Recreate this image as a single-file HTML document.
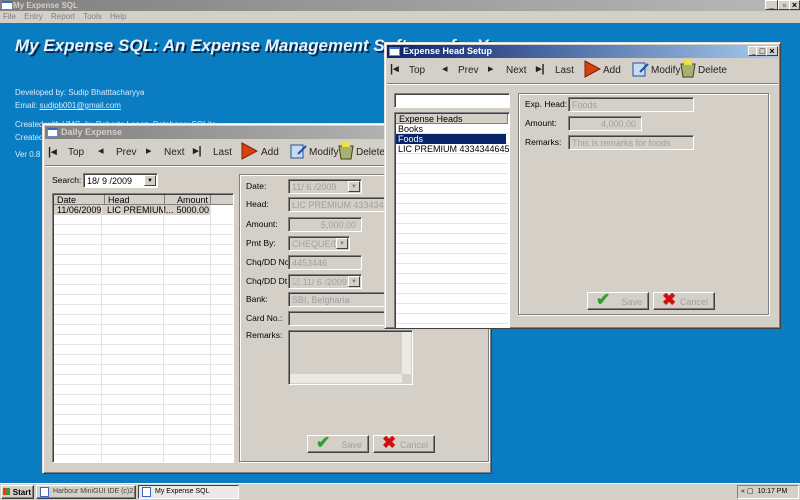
<!DOCTYPE html>
<html><head><meta charset="utf-8"><style>
*{box-sizing:border-box;margin:0;padding:0}
body{width:800px;height:500px;overflow:hidden;position:relative;background:#0a7cc1;font-family:"Liberation Sans",sans-serif;font-size:10px;color:#000}
.a{position:absolute}
.win{position:absolute;background:#d4d0c8;border:1px solid;border-color:#dfdfdf #404040 #404040 #dfdfdf;box-shadow:inset 1px 1px #fff,inset -1px -1px #808080;overflow:hidden}
.tb{position:absolute;left:2px;right:2px;top:2px;height:13px;color:#d4d0c8;font-weight:bold;font-size:9px;line-height:13px;padding-left:16px}
.tb.in{background:linear-gradient(90deg,#808080,#c0c0c0)}
.tb.ac{background:linear-gradient(90deg,#0a246a,#a6caf0);color:#fff}
.ico{position:absolute;left:2px;top:2px;width:11px;height:9px;background:#fff;border:1px solid #6a8cc8;border-top:2px solid #3a6ac8}
.tl{position:absolute;font-size:10px;color:#222}
.sunk{position:absolute;background:#d4d0c8;border:1px solid;border-color:#808080 #fff #fff #808080;box-shadow:inset 1px 1px #404040}
.white{background:#fff}
.grp{position:absolute;border:1px solid #808080;box-shadow:1px 1px #fff,inset 1px 1px #fff}
.lbl{position:absolute;font-size:8.5px;color:#000;white-space:nowrap}
.dis{color:#a0a0a0;font-size:9px;padding:2px 3px;line-height:10px;white-space:nowrap}
.btn{position:absolute;background:#d4d0c8;border:1px solid;border-color:#fff #404040 #404040 #fff;box-shadow:inset -1px -1px #808080;color:#a0a0a0;font-size:9px;text-align:right;padding:4px 6px 0 0;white-space:nowrap;overflow:hidden}
.dd{position:absolute;right:1px;top:1px;width:12px;bottom:1px;background:#d4d0c8;border:1px solid;border-color:#fff #404040 #404040 #fff;font-size:6px;text-align:center;line-height:10px;color:#808080}
.cap{position:absolute;width:13px;height:11px;background:#d4d0c8;border:1px solid;border-color:#fff #404040 #404040 #fff;font-size:9px;line-height:9px;text-align:center;color:#000;font-weight:bold}
</style></head><body>
<div class="a" style="left:0;top:0;width:800px;height:11px;background:linear-gradient(90deg,#808080,#b8b8b8)"></div>
<div class="a" style="left:2px;top:1px;width:10px;height:8px;background:#fff;border-top:2px solid #3a6ac8"></div>
<div class="a" style="left:13px;top:0;color:#d4d0c8;font-weight:bold;font-size:8px;line-height:11px">My Expense SQL</div>
<div class="cap" style="left:765px;top:0;height:10px">_</div><div class="cap" style="left:778px;top:0;height:10px">▫</div><div class="cap" style="left:789px;top:0;height:10px;width:11px">×</div>
<div class="a" style="left:0;top:11px;width:800px;height:12px;background:#d4d0c8;font-size:8px;color:#808080;line-height:12px;padding-left:3px;word-spacing:6px">File Entry Report Tools Help</div>

<div class="a" style="left:15px;top:36px;font-size:17px;font-weight:bold;font-style:italic;color:#e6f2ff;text-shadow:2px 2px 0 #032a48;white-space:nowrap">My Expense SQL: An Expense Management Software for You</div>
<div class="a" style="left:15px;top:86px;font-size:8px;color:#d8ecff;line-height:13px">Developed by: Sudip Bhatttacharyya<br>Email: <u>sudipb001@gmail.com</u></div>
<div class="a" style="left:15px;top:118px;font-size:8px;color:#d8ecff;line-height:13px">Created with HMG, by Roberto Lopez. Database: SQLite<br>Created</div>
<div class="a" style="left:15px;top:150px;font-size:8px;color:#d8ecff">Ver 0.8</div>

<div class="win" style="left:42px;top:123px;width:450px;height:351px">
 <div class="tb in"><div class="ico"></div>Daily Expense</div>
 <div class="a" style="left:2px;right:2px;top:41px;border-top:1px solid #808080;border-bottom:1px solid #fff"></div>
 <div class="tl" style="left:5px;top:21px;font-weight:bold;font-size:11px">|◂</div><div class="tl" style="left:25px;top:23px">Top</div>
 <div class="tl" style="left:55px;top:20px;font-size:11px">◂</div><div class="tl" style="left:73px;top:23px">Prev</div>
 <div class="tl" style="left:103px;top:20px;font-size:11px">▸</div><div class="tl" style="left:121px;top:23px">Next</div>
 <div class="tl" style="left:150px;top:20px;font-weight:bold;font-size:11px">▸|</div><div class="tl" style="left:170px;top:23px">Last</div>
 <svg class="a" style="left:197px;top:17px" width="18" height="20"><path d="M2 2 L17 10 L2 18Z" fill="#d84010" stroke="#802000"/></svg><div class="tl" style="left:218px;top:23px">Add</div>
 <svg class="a" style="left:247px;top:18px" width="18" height="18"><rect x="1" y="3" width="12" height="13" fill="#c8dcf0" stroke="#2050a0"/><path d="M8 12 L16 4" stroke="#2050a0" stroke-width="2"/></svg><div class="tl" style="left:266px;top:23px">Modify</div>
 <svg class="a" style="left:294px;top:16px" width="18" height="20"><path d="M2 6 L16 6 L14 19 L4 19Z" fill="#a8b070" stroke="#404020"/><rect x="5" y="1" width="8" height="6" fill="#f0e040"/></svg><div class="tl" style="left:313px;top:23px">Delete</div>
 <div class="lbl" style="left:9px;top:51px">Search:</div>
 <div class="sunk white" style="left:40px;top:49px;width:75px;height:15px"><span class="a" style="left:3px;top:2px;font-size:9px">18/ 9 /2009</span><div class="dd" style="color:#000">▼</div></div>
 <div class="sunk white" style="left:9px;top:69px;width:182px;height:270px;overflow:hidden">
  <div class="a" style="left:1px;top:1px;width:180px;height:10px;background:#d4d0c8;font-size:9px;line-height:10px;border-bottom:1px solid #808080"><span class="a" style="left:3px">Date</span><span class="a" style="left:50px;border-left:1px solid #808080;padding-left:3px">Head</span><span class="a" style="left:110px;border-left:1px solid #808080;width:47px;text-align:right;padding-right:2px;border-right:1px solid #808080">Amount</span></div>
  <div class="a" style="left:1px;top:11px;width:157px;height:10px;background:#d4d0c8;font-size:9px;line-height:10px"><span class="a" style="left:3px">11/06/2009</span><span class="a" style="left:50px;padding-left:3px">LIC PREMIUM...</span><span class="a" style="left:110px;width:47px;text-align:right;padding-right:2px">5000.00</span></div>
  <div class="a" style="left:1px;top:21px;width:180px;height:250px;background:repeating-linear-gradient(#fff 0 9px,#e4e4e4 9px 10px)"></div>
  <div class="a" style="left:48px;top:11px;height:260px;border-left:1px solid #e4e4e4"></div>
  <div class="a" style="left:110px;top:11px;height:260px;border-left:1px solid #e4e4e4"></div>
  <div class="a" style="left:157px;top:11px;height:260px;border-left:1px solid #e4e4e4"></div>
 </div>
 <div class="grp" style="left:196px;top:50px;width:250px;height:288px"></div>
 <div class="lbl" style="left:203px;top:57px">Date:</div><div class="sunk" style="left:245px;top:55px;width:74px;height:15px"><span class="dis a">11/ 6 /2009</span><div class="dd">▼</div></div>
 <div class="lbl" style="left:203px;top:75px">Head:</div><div class="sunk" style="left:245px;top:73px;width:200px;height:15px"><span class="dis a">LIC PREMIUM 43343446453</span></div>
 <div class="lbl" style="left:203px;top:95px">Amount:</div><div class="sunk" style="left:245px;top:93px;width:74px;height:15px"><span class="dis a" style="right:2px">5,000.00</span></div>
 <div class="lbl" style="left:203px;top:114px">Pmt By:</div><div class="sunk" style="left:245px;top:112px;width:62px;height:15px;overflow:hidden"><span class="dis a">CHEQUE/DD</span><div class="dd">▼</div></div>
 <div class="lbl" style="left:203px;top:133px">Chq/DD No.:</div><div class="sunk" style="left:245px;top:131px;width:74px;height:15px"><span class="dis a">4453446</span></div>
 <div class="lbl" style="left:203px;top:152px">Chq/DD Dt.:</div><div class="sunk" style="left:245px;top:150px;width:74px;height:15px;overflow:hidden"><span class="dis a">☑ 11/ 6 /2009</span><div class="dd">▼</div></div>
 <div class="lbl" style="left:203px;top:170px">Bank:</div><div class="sunk" style="left:245px;top:168px;width:200px;height:15px"><span class="dis a">SBI, Belgharia</span></div>
 <div class="lbl" style="left:203px;top:189px">Card No.:</div><div class="sunk" style="left:245px;top:187px;width:200px;height:15px"></div>
 <div class="lbl" style="left:203px;top:206px">Remarks:</div><div class="sunk" style="left:245px;top:206px;width:125px;height:55px"><div class="a" style="right:1px;top:1px;width:9px;bottom:10px;background:#ece9e4"></div><div class="a" style="left:1px;bottom:1px;right:10px;height:9px;background:#ece9e4"></div></div>
 <div class="btn" style="left:264px;top:311px;width:62px;height:18px">Save<span class="a" style="left:8px;top:-3px;color:#2aa02a;font-size:17px;font-weight:bold">✔</span></div>
 <div class="btn" style="left:330px;top:311px;width:62px;height:18px">Cancel<span class="a" style="left:8px;top:-3px;color:#d01010;font-size:17px;font-weight:bold">✖</span></div>
</div>

<div class="win" style="left:384px;top:42px;width:397px;height:287px">
 <div class="tb ac"><div class="ico"></div>Expense Head Setup</div>
 <div class="cap" style="left:363px;top:3px;height:10px">_</div><div class="cap" style="left:371px;top:3px;height:10px">□</div><div class="cap" style="left:381px;top:3px;height:10px;width:12px">×</div>
 <div class="a" style="left:2px;right:2px;top:40px;border-top:1px solid #808080;border-bottom:1px solid #fff"></div>
 <div class="tl" style="left:5px;top:19px;font-weight:bold;font-size:11px">|◂</div><div class="tl" style="left:24px;top:22px">Top</div>
 <div class="tl" style="left:57px;top:19px;font-size:11px">◂</div><div class="tl" style="left:73px;top:22px">Prev</div>
 <div class="tl" style="left:103px;top:19px;font-size:11px">▸</div><div class="tl" style="left:121px;top:22px">Next</div>
 <div class="tl" style="left:151px;top:19px;font-weight:bold;font-size:11px">▸|</div><div class="tl" style="left:170px;top:22px">Last</div>
 <svg class="a" style="left:198px;top:16px" width="18" height="20"><path d="M2 2 L17 10 L2 18Z" fill="#d84010" stroke="#802000"/></svg><div class="tl" style="left:218px;top:22px">Add</div>
 <svg class="a" style="left:247px;top:17px" width="18" height="18"><rect x="1" y="3" width="12" height="13" fill="#c8dcf0" stroke="#2050a0"/><path d="M8 12 L16 4" stroke="#2050a0" stroke-width="2"/></svg><div class="tl" style="left:266px;top:22px">Modify</div>
 <svg class="a" style="left:294px;top:15px" width="18" height="20"><path d="M2 6 L16 6 L14 19 L4 19Z" fill="#a8b070" stroke="#404020"/><rect x="5" y="1" width="8" height="6" fill="#f0e040"/></svg><div class="tl" style="left:313px;top:22px">Delete</div>
 <div class="sunk white" style="left:9px;top:50px;width:116px;height:15px"></div>
 <div class="sunk white" style="left:9px;top:69px;width:116px;height:240px;overflow:hidden">
  <div class="a" style="left:1px;top:1px;width:112px;height:10px;background:#d4d0c8;font-size:9px;line-height:10px;padding-left:3px;border-bottom:1px solid #808080;border-right:1px solid #808080">Expense Heads</div>
  <div class="a" style="left:1px;top:11px;width:112px;height:230px;background:repeating-linear-gradient(#fff 0 9px,#e4e4e4 9px 10px)"></div>
  <div class="a" style="left:3px;top:11px;font-size:9px;line-height:10px">Books</div>
  <div class="a" style="left:1px;top:21px;width:110px;height:10px;background:#0a246a;color:#fff;font-size:9px;line-height:10px;padding-left:2px">Foods</div>
  <div class="a" style="left:3px;top:31px;font-size:9px;line-height:10px;white-space:nowrap">LIC PREMIUM 43343446453</div>
 </div>
 <div class="grp" style="left:133px;top:50px;width:251px;height:222px"></div>
 <div class="lbl" style="left:140px;top:56px">Exp. Head:</div><div class="sunk" style="left:183px;top:54px;width:126px;height:15px"><span class="dis a">Foods</span></div>
 <div class="lbl" style="left:140px;top:75px">Amount:</div><div class="sunk" style="left:183px;top:73px;width:74px;height:15px"><span class="dis a" style="right:2px">4,000.00</span></div>
 <div class="lbl" style="left:140px;top:94px">Remarks:</div><div class="sunk" style="left:183px;top:92px;width:126px;height:15px"><span class="dis a">This is remarks for foods</span></div>
 <div class="btn" style="left:202px;top:249px;width:62px;height:18px">Save<span class="a" style="left:8px;top:-3px;color:#2aa02a;font-size:17px;font-weight:bold">✔</span></div>
 <div class="btn" style="left:268px;top:249px;width:62px;height:18px">Cancel<span class="a" style="left:8px;top:-3px;color:#d01010;font-size:17px;font-weight:bold">✖</span></div>
</div>

<div class="a" style="left:0;top:483px;width:800px;height:17px;background:#d4d0c8;border-top:1px solid #fff"></div>
<div class="btn" style="left:1px;top:485px;width:33px;height:14px;color:#000;font-weight:bold;font-size:8px;padding:2px 2px 0 0">Start</div>
<div class="a" style="left:3px;top:488px;width:7px;height:7px;background:linear-gradient(90deg,#e04020 50%,#30a030 50%)"></div>
<div class="btn" style="left:36px;top:485px;width:100px;height:14px;color:#444;font-size:7px;text-align:left;padding:2px 0 0 16px">Harbour MiniGUI IDE (c)2...</div>
<div class="a" style="left:40px;top:487px;width:9px;height:10px;background:#fff;border:1px solid #3a6ac8"></div>
<div class="a" style="left:138px;top:485px;width:101px;height:14px;background:#ebe9e4;border:1px solid;border-color:#404040 #fff #fff #404040;font-size:7px;padding:2px 0 0 16px;white-space:nowrap">My Expense SQL</div>
<div class="a" style="left:142px;top:487px;width:9px;height:10px;background:#fff;border:1px solid #3a6ac8"></div>
<div class="a" style="left:737px;top:485px;width:62px;height:14px;border:1px solid;border-color:#808080 #fff #fff #808080;font-size:7px;line-height:12px;padding-left:3px;white-space:nowrap">« ▢ &nbsp;10:17 PM</div>
</body></html>
